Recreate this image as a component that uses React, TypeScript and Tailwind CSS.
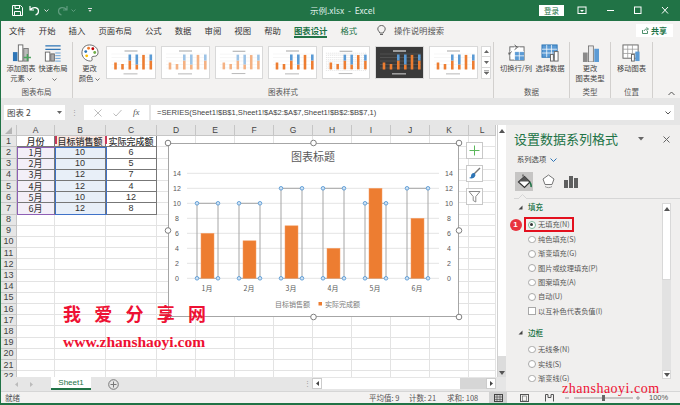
import React from "react";

const FONT = '"Noto Sans CJK SC","Liberation Sans",sans-serif';
const LATIN = '"Liberation Sans",sans-serif';
const SERIF = '"Liberation Serif",serif';

function Thumb({ dark, fade, hatch, w = 48 }: { dark?: boolean; fade?: boolean; hatch?: boolean; w?: number }) {
  const bot = [7, 5.5, 9, 5, 14.6, 9];
  const top = [0, 0, 6, 10, 0, 6];
  const xs = [6.7, 13.7, 21, 28, 34.7, 42];
  const fg = dark ? "#ffffff" : "#a6a6a6";
  return (
    <div className={`h-[33px] border border-[#d9d9d9] shrink-0 ${dark ? "bg-[#3a3a3a]" : "bg-white"}`} style={{ width: w }}>
      <svg width={w - 2} height={31} viewBox="0 0 47 31">
        <rect x="17" y="3.500" width="13" height="1" fill={fg} />
        {hatch && Array.from({ length: 9 }).map((_, i) => <line key={i} x1="3" x2="45" y1={6 + i * 2.2} y2={6 + i * 2.2} stroke="#cfcfcf" strokeWidth="0.6" strokeDasharray="1 1" />)}
        {[7, 10.500, 14, 17.500, 21].map((y) => <line key={y} x1="4" x2="45" y1={y} y2={y} stroke={dark ? "#666" : "#ececec"} strokeWidth="0.5" />)}
        {bot.map((b, i) => (
          <g key={i}>
            <rect x={xs[i]} y={22.5 - b} width="2.600" height={b} fill={fade ? "#f4b183" : "#ed7d31"} />
            <rect x={xs[i]} y={22.5 - b - top[i]} width="2.600" height={top[i]} fill={fade ? "#9dc3e6" : "#5b9bd5"} />
          </g>
        ))}
        <rect x="16" y="26.500" width="14" height="0.800" fill={fg} />
      </svg>
    </div>
  );
}

function Chev() {
  return <svg width="5" height="3" className="inline-block ml-[2px] align-middle"><path d="M.5 .5L2.500 2.500L4.500 .5" fill="none" stroke="#555" strokeWidth=".8" /></svg>;
}

function BigBtn({ children, label, w, ml = 0 }: { children: React.ReactNode; label: React.ReactNode; w: number; ml?: number }) {
  return (
    <div className="flex flex-col items-center pt-[2px] shrink-0" style={{ width: w, marginLeft: ml }}>
      <div className="h-[18px] flex items-center justify-center">{children}</div>
      <div className="text-[7.3px] leading-[10px] text-[#444] text-center mt-[1px] whitespace-nowrap">{label}</div>
    </div>
  );
}

function Group({ w, label, children, sep = true }: { w: number; label: string; children?: React.ReactNode; sep?: boolean }) {
  return (
    <div className={`flex flex-col h-full shrink-0 ${sep ? "border-r border-[#d2d0ce]" : ""}`} style={{ width: w }}>
      <div className="flex-1 flex min-h-0 overflow-hidden">{children}</div>
      <div className="h-[13px] text-[7.5px] leading-[13px] text-center text-[#555]">{label}</div>
    </div>
  );
}

const cols = [16, 38, 51, 51, 39, 39, 39, 39, 39, 39, 39, 39, 27];
const names = ["", "A", "B", "C", "D", "E", "F", "G", "H", "I", "J", "K", "L"];
const A = ["月份", "1月", "2月", "3月", "4月", "5月", "6月"];
const B = ["目标销售额", "10", "10", "12", "12", "10", "12"];
const C = ["实际完成额", "6", "5", "7", "4", "12", "8"];

function Cell({ r, c }: { r: number; c: number }) {
  let text = "";
  let cls = "border-r border-b border-[#e3e3e3]";
  if (r < 7 && c >= 1 && c <= 3) {
    text = [A, B, C][c - 1][r];
    cls = "border-r border-b border-[#777777]";
    if (r === 0) {
      cls += " font-medium";
      if (c === 2) cls += " bg-[#fbeae4]";
    } else if (c === 1) cls += " bg-[#f3eff8]";
    else if (c === 2) cls += " bg-[#e8eff8]";
  }
  const isNum = /^\d+$/.test(text);
  return (
    <div className={`${cls} flex items-center justify-center text-[9px] leading-none text-[#333] whitespace-nowrap`} style={isNum ? { fontFamily: LATIN } : undefined}>
      {text}
    </div>
  );
}

function Sheet() {
  return (
    <div className="relative flex-1 min-w-0 overflow-hidden bg-white">
      <div className="grid" style={{ gridTemplateColumns: cols.map((c) => c + "px").join(" "), gridAutoRows: "11.2px" }}>
        {names.map((n, i) => (
          <div key={i} className="bg-[#e6e6e6] border-r border-b border-[#c6c6c6] flex items-center justify-center text-[8.500px] text-[#444] leading-none" style={{ fontFamily: LATIN }}>
            {i === 0 ? <svg width="7" height="7"><path d="M7 0V7H0Z" fill="#b5b5b5" /></svg> : n}
          </div>
        ))}
        {Array.from({ length: 22 }).map((_, r) => (
          <React.Fragment key={r}>
            <div className="bg-[#e6e6e6] border-r border-b border-[#c6c6c6] flex items-center justify-center text-[9px] text-[#444] leading-none" style={{ fontFamily: LATIN }}>{r + 1}</div>
            {cols.slice(1).map((_, c) => <Cell key={c} r={r} c={c + 1} />)}
          </React.Fragment>
        ))}
      </div>
      {/* range highlights */}
      <div className="absolute left-[16px] top-[22.400px] w-[38.500px] h-[67.500px] border-[1.200px] border-[#8e5fb5]" />
      <div className="absolute left-[54px] top-[22.400px] w-[51.500px] h-[67.500px] border-[1.200px] border-[#3f72c8]" />
      <div className="absolute left-[54px] top-[11.200px] w-[51.500px] h-[8px] border-x-2 border-[#c8385a]" />
      {/* Chart */}
      <div className="absolute left-[167px] top-[18px] w-[291px] h-[174px] border border-[#a6a6a6] bg-white">
        <svg width="291" height="174" viewBox="168 143 291 174" className="overflow-visible absolute left-[-1px] top-[-1px]" fontFamily={FONT}>
          <text x="313" y="161" textAnchor="middle" fontSize="11" fill="#595959">图表标题</text>
          {[0, 2, 4, 6, 8, 10, 12, 14].map((v) => {
            const y = 278.3 - v * 7.5;
            return (
              <g key={v}>
                <line x1="187" x2="439" y1={y} y2={y} stroke="#e4e4e4" strokeWidth="1" />
                <text x="177" y={y + 2.5} textAnchor="middle" fontSize="7" fill="#595959" fontFamily="Liberation Sans">{v}</text>
                <text x="449" y={y + 2.5} textAnchor="middle" fontSize="7" fill="#595959" fontFamily="Liberation Sans">{v}</text>
              </g>
            );
          })}
          {[[6, 10], [5, 10], [7, 12], [4, 12], [12, 10], [8, 12]].map(([a, t], i) => {
            const cx = 207.5 + i * 42;
            const y0 = 278.3;
            const yt = y0 - t * 7.5;
            return (
              <g key={i}>
                <rect x={cx - 10.5} y={yt} width="21" height={y0 - yt} fill="none" stroke="#a6a6a6" strokeWidth="1" />
                <rect x={cx - 6.5} y={y0 - a * 7.5} width="13" height={a * 7.5} fill="#ed7d31" stroke="#f4a16b" strokeWidth=".5" />
                {[[cx - 10.5, yt], [cx + 10.5, yt], [cx - 10.5, y0], [cx + 10.5, y0]].map(([x, y], k) => (
                  <circle key={k} cx={x} cy={y} r="1.800" fill="#cfe3f5" stroke="#5b9bd5" strokeWidth=".9" />
                ))}
                <text x={cx - 0.5} y="291" textAnchor="middle" fontSize="7" fill="#595959">{i + 1}月</text>
              </g>
            );
          })}
          <text x="275" y="306.500" fontSize="7" fill="#7a7a7a">目标销售额</text>
          <rect x="318.500" y="302" width="3.500" height="3.500" fill="#ed7d31" />
          <text x="325" y="306.500" fontSize="7" fill="#7a7a7a">实际完成额</text>
          {[[168, 143], [313.5, 143], [459, 143], [168, 230.5], [459, 230.5], [168, 317], [313.5, 317], [459, 317]].map(([x, y], i) => (
            <circle key={i} cx={x} cy={y} r="2.800" fill="#fff" stroke="#7f7f7f" strokeWidth="1" />
          ))}
        </svg>
      </div>
      {/* chart side buttons */}
      <div className="absolute left-[465px] top-[17px] flex flex-col gap-[6px]">
        <div className="w-[17px] h-[17px] bg-white border border-[#c8c8c8] flex items-center justify-center">
          <svg width="11" height="11"><path d="M5.500 0.500V10.500M0.500 5.500H10.500" stroke="#5cb85c" strokeWidth="1" /></svg>
        </div>
        <div className="w-[17px] h-[17px] bg-white border border-[#c8c8c8] flex items-center justify-center">
          <svg width="13" height="13"><path d="M12 1L6 7" stroke="#777" strokeWidth="1.400" /><path d="M6.500 6C4.500 5.500 3 7 3 9.500C2.500 10.500 1.500 10.800 1 11C3 12 7 11.500 7.500 8Z" fill="#2e75b6" /></svg>
        </div>
        <div className="w-[17px] h-[17px] bg-white border border-[#c8c8c8] flex items-center justify-center">
          <svg width="13" height="13"><path d="M1 1.500H12L7.800 6.500V12L5.200 10.500V6.500Z" fill="none" stroke="#8a8a8a" strokeWidth="1" /></svg>
        </div>
      </div>
      {/* Watermark */}
      <div className="absolute left-[62px] top-[176px] flex gap-[13.250px] text-[18px] leading-[24px] font-bold text-[#ee1133] whitespace-nowrap">
        <span>我</span><span>爱</span><span>分</span><span>享</span><span>网</span>
      </div>
      <div className="absolute left-[62px] top-[208px] text-[15.500px] leading-[18px] font-bold text-[#ee1133] whitespace-nowrap" style={{ fontFamily: SERIF }}>www.zhanshaoyi.com</div>
      {/* vertical scrollbar */}
      <div className="absolute left-[496px] top-0 w-[9px] h-full bg-white border-l border-[#d0d0d0] flex flex-col justify-between">
        <div className="h-[11px] flex items-center justify-center"><svg width="6" height="4"><path d="M3 0L6 4H0Z" fill="#555" /></svg></div>
        <div className="h-[21px] bg-[#dcdcdc] flex items-end justify-center pb-[2px]"><svg width="6" height="4"><path d="M3 4L6 0H0Z" fill="#555" /></svg></div>
      </div>
    </div>
  );
}

function PanelOpt({ label, checked, box }: { label: string; checked?: boolean; box?: boolean }) {
  return (
    <div className="h-[14.400px] flex items-center pl-[22px] text-[7.200px] leading-none text-[#555] whitespace-nowrap">
      {box ? (
        <span className="w-[8px] h-[8px] bg-white border border-[#a8a8a8] -ml-[0.500px] mr-[2.500px]" />
      ) : (
        <span className={`w-[7.500px] h-[7.500px] mr-[2.500px] rounded-full bg-white border flex items-center justify-center ${checked ? "border-[#7fb89b]" : "border-[#a8a8a8]"}`}>
          {checked && <span className="w-[3px] h-[3px] rounded-full bg-[#333]" />}
        </span>
      )}
      <span>{label}</span>
    </div>
  );
}

function SectionHead({ label }: { label: string }) {
  return (
    <div className="flex items-center h-[14px] pl-[12px] gap-[5px] text-[7.500px] font-medium text-[#217346] leading-none">
      <svg width="5" height="5"><path d="M4.500 0.500V4.500H0.500Z" fill="#444" /></svg>
      {label}
    </div>
  );
}

function Panel() {
  return (
    <div className="w-[174px] shrink-0 bg-[#f0efee] flex flex-col overflow-hidden">
      <div className="h-[28px] flex items-center pl-[8px] pr-[10px] justify-between shrink-0">
        <span className="text-[13px] leading-[18px] text-[#217346]">设置数据系列格式</span>
        <div className="flex items-center gap-[19px]">
          <svg width="6" height="4"><path d="M0 0H6L3 3.500Z" fill="#666" /></svg>
          <svg width="7" height="7"><path d="M0.500 0.500L6.500 6.500M6.500 0.500L0.500 6.500" stroke="#666" strokeWidth="1" /></svg>
        </div>
      </div>
      <div className="h-[14px] pl-[11px] flex items-center gap-[4px] text-[7.300px] text-[#444] leading-none shrink-0">
        系列选项
        <svg width="7" height="5"><path d="M0.500 0.500L3.500 3.500L6.500 0.500" fill="none" stroke="#2e75b6" strokeWidth="1" /></svg>
      </div>
      <div className="h-[31px] pl-[9px] pt-[5px] flex items-start gap-[7px] shrink-0">
        <div className="w-[18px] h-[19px] bg-[#c6c5c4] flex items-center justify-center">
          <svg width="15" height="15"><path d="M1.500 8L7.500 2.500L13 8L7.500 13.500Z" fill="#fff" stroke="#333" strokeWidth="1.200" /><path d="M2 7.500L7.500 2.500L12.500 7.500Z" fill="#555" /><path d="M6 2.500V0.500" stroke="#333" /><path d="M13 8.500C14 10 14.500 11 14 13" stroke="#217346" strokeWidth="1.600" fill="none" /></svg>
        </div>
        <div className="w-[16px] h-[19px] flex items-center justify-center">
          <svg width="13" height="15"><path d="M6.500 1L12 5L10 10.500H3L1 5Z" fill="#fff" stroke="#777" /><path d="M3 12.500C5 14 8 14 10 12.500" fill="none" stroke="#999" /></svg>
        </div>
        <div className="w-[16px] h-[19px] flex items-center justify-center">
          <svg width="14" height="13"><rect x="0" y="5" width="4" height="8" fill="#5f5f5f" /><rect x="5" y="1" width="4" height="12" fill="#5f5f5f" /><rect x="10" y="3" width="4" height="10" fill="#5f5f5f" /></svg>
        </div>
      </div>
      <div className="relative flex-1 min-h-0 border-t border-[#d6d6d6] ml-[8px]">
        <svg width="9" height="5" className="absolute left-[4px] top-[-5px]"><path d="M0 5L4.500 0.500L9 5" fill="#f0efee" stroke="#d6d6d6" /></svg>
        <div className="-ml-[8px] pt-[1px] overflow-hidden h-full relative">
          <SectionHead label="填充" />
          <div className="h-[3.800px]" />
          <div className="relative">
            <div className="absolute left-[18px] top-[-0.500px] w-[50px] h-[15px] border-2 border-[#e3101e]" />
            <div className="absolute left-[3.500px] top-[1px] w-[12px] h-[12px] rounded-full bg-[#e8343f] flex items-center justify-center text-white text-[8px] font-bold leading-none" style={{ fontFamily: LATIN }}>1</div>
            <PanelOpt label="无填充(N)" checked />
          </div>
          <PanelOpt label="纯色填充(S)" />
          <PanelOpt label="渐变填充(G)" />
          <PanelOpt label="图片或纹理填充(P)" />
          <PanelOpt label="图案填充(A)" />
          <PanelOpt label="自动(U)" />
          <PanelOpt label="以互补色代表负值(I)" box />
          <div className="h-[7.200px]" />
          <SectionHead label="边框" />
          <div className="h-[2.800px]" />
          <PanelOpt label="无线条(N)" />
          <PanelOpt label="实线(S)" />
          <PanelOpt label="渐变线(G)" />
        </div>
        <div className="absolute left-[148px] top-[4px] w-[9px] bottom-[12px] bg-[#e2e2e2] flex flex-col">
          <div className="h-[77px] bg-white border border-[#d8d8d8] flex justify-center pt-[3px]"><svg width="6" height="4"><path d="M3 0L6 4H0Z" fill="#555" /></svg></div>
          <div className="flex-1" />
          <div className="h-[9px] bg-white border border-[#d8d8d8] flex items-center justify-center"><svg width="6" height="4"><path d="M3 4L6 0H0Z" fill="#555" /></svg></div>
        </div>
      </div>
    </div>
  );
}

export default function App() {
  const tabs = ["文件", "开始", "插入", "页面布局", "公式", "数据", "审阅", "视图", "帮助"];
  return (
    <div className="w-[680px] h-[405px] flex flex-col overflow-hidden bg-[#217346] relative" style={{ fontFamily: FONT }}>
      {/* Title bar */}
      <div className="h-[21px] shrink-0 flex items-center text-white relative">
        <div className="flex items-center pl-[12px] gap-[6px]">
          <svg width="11" height="11" viewBox="0 0 11 11"><path d="M.5 .5H8.500L10.500 2.500V10.500H.5Z M3 .5V3.500H7.500V.5 M2.500 10.500V6.500H8.500V10.500" fill="none" stroke="#fff" strokeWidth="1" /></svg>
          <svg width="12" height="11" viewBox="0 0 12 11"><path d="M1 1V5H5M1.500 4.500C4 1.500 9.500 2 9.500 6C9.500 8 8.500 9.500 6.500 10" fill="none" stroke="#fff" strokeWidth="1.200" /></svg>
          <svg width="5" height="3" className="-ml-[3px]"><path d="M.5 .5L2.500 2.500L4.500 .5" fill="none" stroke="#ddd" /></svg>
          <svg width="12" height="11" viewBox="0 0 12 11" className="ml-[1px]"><path d="M11 1V5H7M10.500 4.500C8 1.500 2.500 2 2.500 6C2.500 8 3.500 9.500 5.500 10" fill="none" stroke="#5f9c7e" strokeWidth="1.200" /></svg>
          <svg width="5" height="3" className="-ml-[3px]"><path d="M.5 .5L2.500 2.500L4.500 .5" fill="none" stroke="#5f9c7e" /></svg>
          <svg width="5" height="5" className="ml-[6px]"><path d="M0 .5H4" stroke="#ddd" /><path d="M.5 2H3.500L2 4Z" fill="#ddd" /></svg>
        </div>
        <div className="absolute left-[310px] top-[3px] text-[8.500px] leading-[14px] text-[#dfeee6] whitespace-pre">示例.xlsx  -  Excel</div>
        <div className="absolute left-[539px] top-[5px] w-[25px] h-[11px] bg-white text-[#217346] text-[7.500px] leading-[11px] text-center">登录</div>
        <svg width="110" height="21" className="absolute left-[570px] top-0">
          <rect x="8" y="7" width="8" height="6.500" fill="none" stroke="#fff" strokeWidth="1" />
          <path d="M10 10H14L12 12Z" fill="#fff" />
          <path d="M37 10.500H44" stroke="#fff" />
          <rect x="64.500" y="7" width="6.500" height="6.500" fill="none" stroke="#fff" />
          <path d="M92 7L98 13.500M98 7L92 13.500" stroke="#fff" />
        </svg>
      </div>
      {/* Tabs */}
      <div className="h-[21px] shrink-0 bg-[#f3f2f1] ml-[1px] flex items-center pl-[8px] pb-[3px] text-[8.400px] text-[#333] relative leading-none whitespace-nowrap">
        <div className="flex gap-[13.050px]">
          {tabs.map((t) => <span key={t}>{t}</span>)}
          <span className="text-[#217346] font-bold border-b-[2px] border-[#217346] pb-[2px] -mb-[4px]">图表设计</span>
          <span className="text-[#217346]">格式</span>
        </div>
        <svg width="9" height="11" className="absolute left-[376px] top-[4px]"><path d="M4.500 .5C2 .5 .8 2.300 .8 4C.8 5.800 2.500 6.500 2.800 8H6.200C6.500 6.500 8.200 5.800 8.200 4C8.200 2.300 7 .5 4.500 .5ZM3 9.500H6" fill="none" stroke="#555" strokeWidth=".9" /></svg>
        <span className="absolute left-[393px] top-[5px] text-[#555]">操作说明搜索</span>
        <div className="absolute left-[635px] top-[3px] w-[37px] h-[13px] bg-white flex items-center justify-center gap-[2px] text-[#217346] font-bold text-[8px]">
          <svg width="7" height="7"><path d="M.5 3V6.500H5.500V4M2 4C2.500 2.500 3.500 2 5 2M4.500 .5L6.500 2L4.500 3.500" fill="none" stroke="#217346" strokeWidth=".8" /></svg>
          共享
        </div>
      </div>
      {/* Ribbon */}
      <div className="h-[56px] shrink-0 bg-[#f3f2f1] ml-[1px] flex relative">
        <Group w={72} label="图表布局">
          <BigBtn w={34} ml={3} label={<>添加图表<br />元素<Chev /></>}>
            <svg width="19" height="18" viewBox="0 0 21 20"><rect x="1" y="9" width="5" height="10" fill="#2e75b6" /><rect x="7" y="1" width="5" height="18" fill="#fff" stroke="#666" /><rect x="13" y="5" width="5" height="14" fill="#bbb" stroke="#777" /><path d="M17 11V19M13 15H21" stroke="#4ba35f" strokeWidth="1.500" /></svg>
          </BigBtn>
          <BigBtn w={30} label={<>快速布局<br /><Chev /></>}>
            <svg width="18" height="18" viewBox="0 0 19 20"><path d="M1 2H18M1 6H18" stroke="#2e75b6" strokeWidth="1.500" /><rect x="1" y="9" width="5" height="10" fill="#fff" stroke="#666" /><rect x="7" y="11" width="4" height="8" fill="#aaa" stroke="#666" /><path d="M12 10H18M12 13H18M12 16H18M12 19H18" stroke="#5b9bd5" /></svg>
          </BigBtn>
        </Group>
        <Group w={421} label="图表样式">
          <div className="flex w-full">
            <BigBtn w={33} label={<>更改<br />颜色<Chev /></>}>
              <svg width="18" height="18" viewBox="0 0 19 19"><path d="M9 1C4 1 1 4.500 1 9.500C1 14 5 18 10 18C12 18 12 16 11.500 15C11 13.500 12 13 14 13C16.500 13 18 11.500 18 9C18 4.500 14 1 9 1Z" fill="#fff" stroke="#666" /><circle cx="5" cy="8" r="1.500" fill="#2e75b6" /><circle cx="8" cy="4.500" r="1.500" fill="#ed7d31" /><circle cx="12.500" cy="5" r="1.500" fill="#c00000" /><circle cx="14.500" cy="9" r="1.500" fill="#70ad47" /><circle cx="6" cy="12.500" r="1.500" fill="#ffc000" /></svg>
            </BigBtn>
            <div className="flex pt-[3.500px] gap-[5px] h-fit">
              <Thumb w={50} /><Thumb w={49} fade /><Thumb w={48} fade /><Thumb w={49} /><Thumb w={48} hatch /><Thumb w={49} dark /><Thumb w={49} />
              <div className="w-[10px] h-[33px] -ml-[2px] bg-white border border-[#d9d9d9] flex flex-col divide-y divide-[#d9d9d9]">
                <div className="flex-1 flex items-center justify-center"><svg width="5" height="3"><path d="M2.500 0L5 3H0Z" fill="#666" /></svg></div>
                <div className="flex-1 flex items-center justify-center"><svg width="5" height="3"><path d="M2.500 3L5 0H0Z" fill="#666" /></svg></div>
                <div className="flex-1 flex items-center justify-center"><svg width="5" height="5"><path d="M0 .5H5M2.500 4.500L5 2H0Z" stroke="#666" strokeWidth=".5" fill="#666" /></svg></div>
              </div>
            </div>
          </div>
        </Group>
        <Group w={76} label="数据">
          <BigBtn w={38} ml={3} label="切换行/列">
            <svg width="18" height="18" viewBox="0 0 19 19"><rect x="3" y="3" width="15" height="14" fill="#fff" stroke="#666" /><rect x="8" y="8" width="10" height="9" fill="#5b9bd5" /><path d="M3 8H18M3 12.500H18M8 3V17M13 3V17" stroke="#fff" strokeWidth=".8" /><path d="M8 1L11 3.500L8 6M2 9V11L5 8" fill="none" stroke="#555" /></svg>
          </BigBtn>
          <BigBtn w={30} label="选择数据">
            <svg width="19" height="18" viewBox="0 0 20 19"><rect x="1" y="1" width="16" height="13" fill="#5b9bd5" stroke="#2e75b6" /><path d="M1 5.500H17M1 9.500H17M6 1V14M11 1V14" stroke="#fff" strokeWidth=".8" /><rect x="10" y="11" width="3" height="7" fill="#fff" stroke="#666" /><rect x="14" y="8" width="4" height="10" fill="#fff" stroke="#666" /></svg>
          </BigBtn>
        </Group>
        <Group w={41} label="类型">
          <BigBtn w={40} label={<>更改<br />图表类型</>}>
            <svg width="17" height="18" viewBox="0 0 18 19"><rect x="1" y="9" width="5" height="10" fill="#8a8a8a" /><rect x="7" y="2" width="5" height="17" fill="#e8e8e8" stroke="#666" strokeWidth=".8" /><rect x="13" y="5" width="5" height="14" fill="#5b9bd5" /></svg>
          </BigBtn>
        </Group>
        <Group w={42} label="位置">
          <BigBtn w={41} label="移动图表">
            <svg width="19" height="18" viewBox="0 0 20 19"><rect x="1" y="1" width="16" height="14" fill="#fff" stroke="#666" /><path d="M1 5.500H17M1 10H17M6 1V15M11 1V15" stroke="#999" strokeWidth=".8" /><rect x="10" y="11" width="3" height="7" fill="#fff" stroke="#666" /><rect x="14" y="8" width="4.500" height="10" fill="#5b9bd5" /></svg>
          </BigBtn>
        </Group>
        <svg width="7" height="5" className="absolute left-[667px] top-[49px]"><path d="M.5 4L3.500 1L6.500 4" fill="none" stroke="#555" /></svg>
      </div>
      {/* Formula bar */}
      <div className="h-[27px] shrink-0 bg-[#e6e6e6] ml-[1px] flex items-center pl-[3px] pr-[6px] pt-[2px] whitespace-nowrap">
        <div className="w-[61px] h-[15px] bg-white flex items-center justify-between px-[3px] text-[8.500px] text-[#444] leading-none">
          图表 2
          <svg width="5" height="3"><path d="M0 0H5L2.500 3Z" fill="#666" /></svg>
        </div>
        <div className="w-[19px] flex justify-center text-[#999] text-[7px] leading-none" style={{ fontFamily: LATIN }}>⋮</div>
        <div className="w-[65px] h-[15px] bg-white flex items-center justify-around px-[4px]">
          <svg width="8" height="8"><path d="M.5 .5L7.500 7.500M7.500 .5L.5 7.500" stroke="#bdbdbd" /></svg>
          <svg width="9" height="8"><path d="M.5 4.500L3 7L8.500 1" fill="none" stroke="#bdbdbd" /></svg>
          <span className="text-[9px] italic text-[#555] leading-none" style={{ fontFamily: SERIF }}>fx</span>
        </div>
        <div className="w-[2px]" />
        <div className="flex-1 h-[15px] bg-white flex items-center justify-between pl-[6px] pr-[3px] text-[7.600px] text-[#444] leading-none" style={{ fontFamily: LATIN }}>
          =SERIES(Sheet1!$B$1,Sheet1!$A$2:$A$7,Sheet1!$B$2:$B$7,1)
          <svg width="6" height="4"><path d="M.5 .5L3 3L5.500 .5" fill="none" stroke="#555" /></svg>
        </div>
      </div>
      {/* Main */}
      <div className="flex-1 min-h-0 flex ml-[1px]">
        <div className="flex-1 min-w-0 flex flex-col">
          <Sheet />
          <div className="h-[14px] shrink-0 bg-[#e6e6e6] flex items-stretch">
            <div className="w-[50px] flex items-center pl-[14px] gap-[12px]">
              <svg width="3" height="5"><path d="M0 2.500L3 0V5Z" fill="#bbb" /></svg>
              <svg width="3" height="5"><path d="M3 2.500L0 0V5Z" fill="#bbb" /></svg>
            </div>
            <div className="w-[40px] h-[13px] bg-white border-b-2 border-[#217346] text-[#217346] text-[8px] leading-[12px] text-center" style={{ fontFamily: LATIN }}>Sheet1</div>
            <div className="w-[44px] flex items-center justify-center">
              <svg width="11" height="11"><circle cx="5.500" cy="5.500" r="4.800" fill="none" stroke="#777" /><path d="M5.500 2.500V8.500M2.500 5.500H8.500" stroke="#777" /></svg>
            </div>
            <div className="w-[168px]" />
            <div className="w-[9px] text-center text-[7px] leading-[13px] text-[#999]" style={{ fontFamily: LATIN }}>⋮</div>
            <div className="w-[10px] h-[11px] mt-[1px] bg-white border border-[#ccc] flex items-center justify-center"><svg width="3" height="5"><path d="M0 2.500L3 0V5Z" fill="#444" /></svg></div>
            <div className="w-[138px] h-[11px] mt-[1px] bg-white" />
            <div className="w-[26px] h-[11px] mt-[1px] bg-[#d6d6d6]" />
            <div className="w-[10px] h-[11px] mt-[1px] bg-white border border-[#ccc] flex items-center justify-center"><svg width="3" height="5"><path d="M3 2.500L0 0V5Z" fill="#444" /></svg></div>
          </div>
        </div>
        <Panel />
      </div>
      {/* Status bar */}
      <div className="h-[12px] shrink-0 bg-[#f3f2f1] ml-[1px] mb-[2px] flex items-center text-[7.500px] leading-none text-[#555] relative whitespace-nowrap border-t border-[#d6d6d6]">
        <span className="pl-[4px]">就绪</span>
        <span className="absolute left-[368px]">平均值: 9</span>
        <span className="absolute left-[408px]">计数: 21</span>
        <span className="absolute left-[446px]">求和: 108</span>
        <div className="absolute left-[488px] top-0 h-full w-[18px] bg-[#d2d2d2] flex items-center justify-center">
          <svg width="9" height="8"><rect x=".5" y=".5" width="8" height="7" fill="none" stroke="#444" /><path d="M3 .5V7.500M6 .5V7.500M.5 3H8.500M.5 5.500H8.500" stroke="#444" strokeWidth=".6" /></svg>
        </div>
        <svg width="9" height="8" className="absolute left-[519px] top-[1.500px]"><rect x=".5" y=".5" width="8" height="7" fill="none" stroke="#555" /><rect x="2.500" y="2" width="4" height="5" fill="none" stroke="#555" strokeWidth=".6" /></svg>
        <svg width="9" height="8" className="absolute left-[544px] top-[1.500px]"><path d="M.5 7.500V.5H3V3.500H6V.5H8.500V7.500" fill="none" stroke="#555" /></svg>
        <svg width="76" height="8" className="absolute left-[564px] top-[1.500px]"><path d="M0 4H4M9 4H68M71 4H75M73 2V6" stroke="#999" /><rect x="37" y="1" width="3" height="6" fill="#666" /></svg>
        <span className="absolute left-[648px]" style={{ fontFamily: LATIN }}>100%</span>
      </div>
      <div className="absolute left-[562px] top-[381px] text-[14px] leading-[16px] text-[#ee1133] whitespace-nowrap tracking-[0.5px]" style={{ fontFamily: SERIF }}>zhanshaoyi.com</div>
    </div>
  );
}
